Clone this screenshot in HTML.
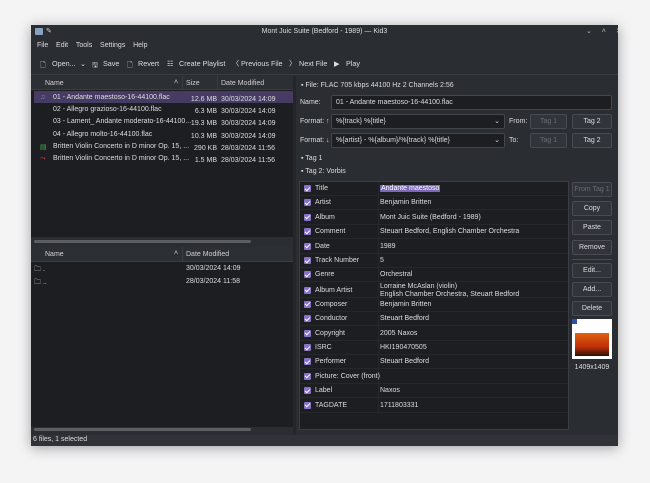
<!DOCTYPE html>
<html><head><style>
*{box-sizing:border-box;margin:0;padding:0}
body{width:650px;height:483px;background:#f4f4f5;font-family:"Liberation Sans","DejaVu Sans",sans-serif;font-size:7px;color:#dcdde0;position:relative;overflow:hidden}
.win{position:absolute;left:31px;top:25px;width:587px;height:421px;background:#2a2d31;box-shadow:0 2px 12px rgba(0,0,0,.35);overflow:hidden}
.a{position:absolute;white-space:nowrap}
.list{position:absolute;background:#1c1e21}
.hdr{position:absolute;background:#2c2f33;border-bottom:1px solid #3a3d42;color:#d0d0d3}
.inp{position:absolute;background:#1c1e21;border:1px solid #43464c;border-radius:2px;padding:3px 4px;height:15px}
.btn{position:absolute;background:#31343a;border:1px solid #484b52;border-radius:2px;text-align:center;line-height:13px;height:15px;width:40px}
.dis{color:#6a6d72}
.cb{position:absolute;left:4px;width:7px;height:7px;background:#8672c6;border-radius:1px}
.cb:after{content:"";position:absolute;left:2px;top:0.5px;width:2px;height:4px;border:solid #fff;border-width:0 1px 1px 0;transform:rotate(45deg)}
.row{position:absolute;left:0;width:268px;height:14px;border-bottom:1px solid #24272b}
.row .k{position:absolute;left:15px;top:3px}
.row .v{position:absolute;left:80px;top:3px}
.sb{position:absolute;height:3px;background:#5b5e63;border-radius:2px}
.tb{position:absolute;top:34px;white-space:nowrap;font-size:7.2px}
</style></head><body>
<div class="win">
<div class="a" style="left:4px;top:3px;width:8px;height:7px;background:#8aa0c0;border-radius:1px"></div>
<div class="a" style="left:15px;top:2px;color:#ccc">✎</div>
<div class="a" style="left:0;width:587px;top:3px;text-align:center;color:#dcdde0">Mont Juic Suite (Bedford - 1989) — Kid3</div>
<div class="a" style="left:555px;top:2px;color:#bbb;letter-spacing:4px">⌄ ˄ ✕</div>
<div class="a" style="left:6px;top:17px">File&nbsp;&nbsp;&nbsp;&nbsp;Edit&nbsp;&nbsp;&nbsp;&nbsp;Tools&nbsp;&nbsp;&nbsp;&nbsp;Settings&nbsp;&nbsp;&nbsp;&nbsp;Help</div>
<!-- toolbar -->
<div class="tb" style="left:9px">🗋</div><div class="tb" style="left:21px">Open...</div>
<div class="tb" style="left:49px">⌄</div>
<div class="tb" style="left:61px">🖫</div><div class="tb" style="left:72px">Save</div>
<div class="tb" style="left:96px">🗋</div><div class="tb" style="left:107px">Revert</div>
<div class="tb" style="left:136px">☷</div><div class="tb" style="left:148px">Create Playlist</div>
<div class="tb" style="left:201px">〈</div><div class="tb" style="left:210px">Previous File</div>
<div class="tb" style="left:258px">〉</div><div class="tb" style="left:268px">Next File</div>
<div class="tb" style="left:303px">▶</div><div class="tb" style="left:315px">Play</div>
<div class="a" style="left:0;top:49px;width:587px;height:1px;background:#3a3d42"></div>
<div class="list" style="left:0;top:51px;width:262px;height:164px"></div>
<div class="hdr" style="left:0;top:51px;width:262px;height:14px">
 <span class="a" style="left:14px;top:4px">Name</span><span class="a" style="left:143px;top:3px">˄</span>
 <span class="a" style="left:151px;top:0;height:14px;border-left:1px solid #3a3d42"></span>
 <span class="a" style="left:155px;top:4px">Size</span>
 <span class="a" style="left:186px;top:0;height:14px;border-left:1px solid #3a3d42"></span>
 <span class="a" style="left:190px;top:4px">Date Modified</span>
</div>
<div class="a" style="left:3px;top:66px;width:259px;height:12px;background:#463c63"></div>
<div class="a" style="left:9px;top:69px;color:#8e7fc0">♫</div>
<div class="a" style="left:22px;top:69px">01 - Andante maestoso-16-44100.flac</div>
<div class="a" style="left:22px;top:81px">02 - Allegro grazioso-16-44100.flac</div>
<div class="a" style="left:22px;top:93px">03 - Lament_ Andante moderato-16-44100...</div>
<div class="a" style="left:22px;top:106px">04 - Allegro molto-16-44100.flac</div>
<div class="a" style="left:9px;top:118px;color:#4caf50">▤</div>
<div class="a" style="left:22px;top:118px">Britten Violin Concerto in D minor Op. 15, ...</div>
<div class="a" style="left:9px;top:130px;color:#e53935">⤳</div>
<div class="a" style="left:22px;top:130px">Britten Violin Concerto in D minor Op. 15, ...</div>
<div class="a" style="left:0;top:69px;width:186px;text-align:right;line-height:12.2px">12.6 MB<br>6.3 MB<br>19.3 MB<br>10.3 MB<br>290 KB<br>1.5 MB</div>
<div class="a" style="left:190px;top:69px;line-height:12.2px">30/03/2024 14:09<br>30/03/2024 14:09<br>30/03/2024 14:09<br>30/03/2024 14:09<br>28/03/2024 11:56<br>28/03/2024 11:56</div>
<div class="a" style="left:0;top:212px;width:262px;height:8px;background:#2a2d31"></div>
<div class="sb" style="left:3px;top:215px;width:217px"></div>
<div class="list" style="left:0;top:222px;width:262px;height:180px"></div>
<div class="hdr" style="left:0;top:222px;width:262px;height:15px">
 <span class="a" style="left:14px;top:4px">Name</span><span class="a" style="left:143px;top:3px">˄</span>
 <span class="a" style="left:151px;top:0;height:15px;border-left:1px solid #3a3d42"></span>
 <span class="a" style="left:155px;top:4px">Date Modified</span>
</div>
<div class="a" style="left:3px;top:240px">🗀 .</div>
<div class="a" style="left:3px;top:253px">🗀 ..</div>
<div class="a" style="left:155px;top:240px">30/03/2024 14:09</div>
<div class="a" style="left:155px;top:253px">28/03/2024 11:58</div>
<div class="a" style="left:0;top:402px;width:262px;height:8px;background:#2a2d31"></div>
<div class="sb" style="left:3px;top:403px;width:217px"></div>
<div class="a" style="left:262px;top:51px;width:3px;height:360px;background:#23262a"></div>
<div class="a" style="left:0;top:410px;width:587px;height:11px;background:#2f3237"></div>
<div class="a" style="left:2px;top:411px">6 files, 1 selected</div>
<div class="a" style="left:270px;top:57px">▪ File: FLAC 705 kbps 44100 Hz 2 Channels 2:56</div>
<div class="a" style="left:269px;top:74px">Name:</div>
<div class="inp" style="left:300px;top:70px;width:281px">01 - Andante maestoso-16-44100.flac</div>
<div class="a" style="left:269px;top:93px">Format: ↑</div>
<div class="inp" style="left:300px;top:89px;width:174px">%{track} %{title}<span class="a" style="right:4px;top:2px">⌄</span></div>
<div class="a" style="left:478px;top:93px">From:</div>
<div class="btn dis" style="left:499px;top:89px;width:37px">Tag 1</div>
<div class="btn" style="left:541px;top:89px">Tag 2</div>
<div class="a" style="left:269px;top:112px">Format: ↓</div>
<div class="inp" style="left:300px;top:108px;width:174px">%{artist} - %{album}/%{track} %{title}<span class="a" style="right:4px;top:2px">⌄</span></div>
<div class="a" style="left:478px;top:112px">To:</div>
<div class="btn dis" style="left:499px;top:108px;width:37px">Tag 1</div>
<div class="btn" style="left:541px;top:108px">Tag 2</div>
<div class="a" style="left:270px;top:130px">▪ Tag 1</div>
<div class="a" style="left:270px;top:143px">▪ Tag 2: Vorbis</div>
<div class="list" style="left:268px;top:156px;width:270px;height:249px;border:1px solid #3a3d42">
 <div class="a" style="left:78px;top:0;width:1px;height:232px;background:#24272b"></div>
 <div class="row" style="top:0"><span class="cb" style="top:3px"></span><span class="k">Title</span><span class="v" style="background:#7b68b8;color:#fff;padding:0 1px">Andante maestoso</span></div>
 <div class="row" style="top:14.4px"><span class="cb" style="top:3px"></span><span class="k">Artist</span><span class="v">Benjamin Britten</span></div>
 <div class="row" style="top:28.8px"><span class="cb" style="top:3px"></span><span class="k">Album</span><span class="v">Mont Juic Suite (Bedford - 1989)</span></div>
 <div class="row" style="top:43.2px"><span class="cb" style="top:3px"></span><span class="k">Comment</span><span class="v">Steuart Bedford, English Chamber Orchestra</span></div>
 <div class="row" style="top:57.6px"><span class="cb" style="top:3px"></span><span class="k">Date</span><span class="v">1989</span></div>
 <div class="row" style="top:72px"><span class="cb" style="top:3px"></span><span class="k">Track Number</span><span class="v">5</span></div>
 <div class="row" style="top:86.4px"><span class="cb" style="top:3px"></span><span class="k">Genre</span><span class="v">Orchestral</span></div>
 <div class="row" style="top:100.8px;height:15px"><span class="cb" style="top:4px"></span><span class="k" style="top:4px">Album Artist</span><span class="v" style="top:0;line-height:8px">Lorraine McAslan (violin)<br>English Chamber Orchestra, Steuart Bedford</span></div>
 <div class="row" style="top:115.8px"><span class="cb" style="top:3px"></span><span class="k">Composer</span><span class="v">Benjamin Britten</span></div>
 <div class="row" style="top:130.2px"><span class="cb" style="top:3px"></span><span class="k">Conductor</span><span class="v">Steuart Bedford</span></div>
 <div class="row" style="top:144.6px"><span class="cb" style="top:3px"></span><span class="k">Copyright</span><span class="v">2005 Naxos</span></div>
 <div class="row" style="top:159px"><span class="cb" style="top:3px"></span><span class="k">ISRC</span><span class="v">HKI190470505</span></div>
 <div class="row" style="top:173.4px"><span class="cb" style="top:3px"></span><span class="k">Performer</span><span class="v">Steuart Bedford</span></div>
 <div class="row" style="top:187.8px"><span class="cb" style="top:3px"></span><span class="k">Picture: Cover (front)</span></div>
 <div class="row" style="top:202.2px"><span class="cb" style="top:3px"></span><span class="k">Label</span><span class="v">Naxos</span></div>
 <div class="row" style="top:216.6px"><span class="cb" style="top:3px"></span><span class="k">TAGDATE</span><span class="v">1711803331</span></div>
</div>
<div class="btn dis" style="left:541px;top:157px">From Tag 1</div>
<div class="btn" style="left:541px;top:176px">Copy</div>
<div class="btn" style="left:541px;top:195px">Paste</div>
<div class="btn" style="left:541px;top:215px">Remove</div>
<div class="a" style="left:541px;top:234px;width:40px;height:1px;background:#484b52"></div>
<div class="btn" style="left:541px;top:238px">Edit...</div>
<div class="btn" style="left:541px;top:257px">Add...</div>
<div class="btn" style="left:541px;top:276px">Delete</div>
<div class="a" style="left:541px;top:294px;width:40px;height:40px;background:#fff">
 <div class="a" style="left:3px;top:14px;width:34px;height:23px;background:linear-gradient(#e06010,#c0300a 60%,#2a1208)"></div>
 <div class="a" style="left:0;top:0;width:5px;height:5px;background:#3050a0"></div>
</div>
<div class="a" style="left:541px;top:339px;width:40px;text-align:center">1409x1409</div>
</div>
</body></html>
